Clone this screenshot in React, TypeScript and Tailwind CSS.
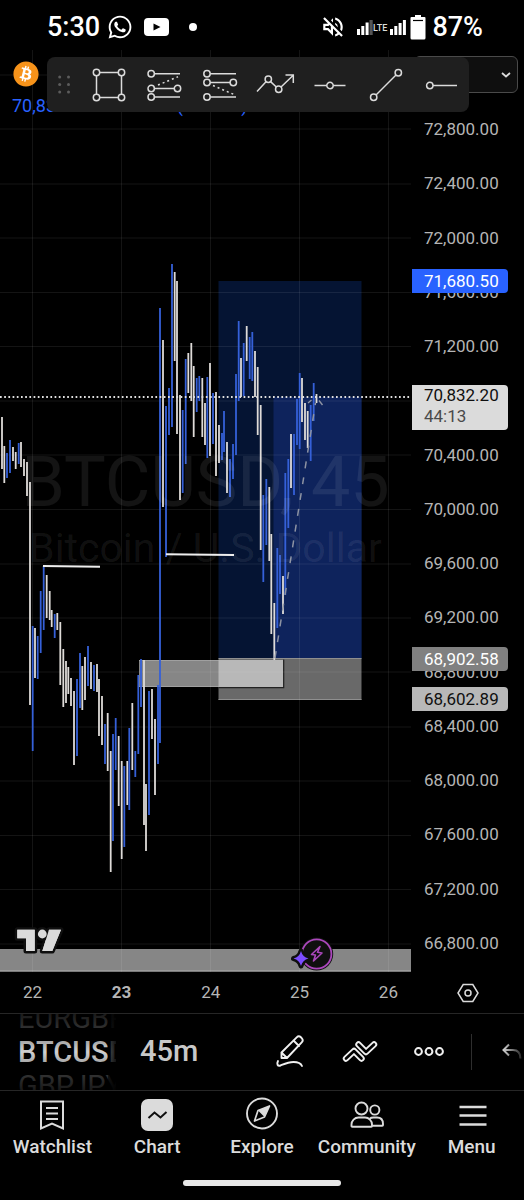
import { ReactNode } from "react";
import { FaBitcoin, FaWhatsapp } from "react-icons/fa";
import { MdOutlineVolumeOff } from "react-icons/md";

type Bar = [x: number, top: number, bottom: number, color: "w" | "b"];

const bars: Bar[] = [
  [2, 417, 469, "w"], [4.3, 446, 483, "w"], [7, 453, 478, "b"], [10, 440, 473, "b"],
  [13, 447, 461, "w"], [15.7, 452, 469, "w"], [18.7, 443, 464, "b"], [21, 442, 467, "w"],
  [24, 459, 476, "w"], [27, 462, 496, "w"], [30, 482, 705, "w"], [32.7, 626, 751, "b"],
  [35, 628, 678, "w"], [37.7, 636, 679, "b"], [40.7, 591, 653, "b"], [43.7, 566, 630, "b"],
  [46.7, 575, 618, "w"], [49.7, 591, 620, "w"], [51.7, 610, 627, "w"], [54.7, 614, 638, "b"],
  [57.3, 613, 630, "w"], [60.3, 622, 685, "w"], [63.3, 649, 707, "w"], [66, 661, 703, "w"],
  [68.3, 667, 694, "w"], [71, 678, 706, "w"], [74, 691, 765, "w"], [77, 679, 756, "b"],
  [80, 653, 708, "b"], [82.3, 666, 710, "w"], [85, 657, 700, "w"], [88, 646, 686, "b"],
  [91, 662, 689, "w"], [94, 665, 691, "b"], [97, 664, 692, "w"], [99, 679, 736, "w"],
  [102, 696, 745, "w"], [105, 724, 764, "b"], [107.7, 713, 771, "w"], [110.7, 751, 872, "w"],
  [113, 734, 841, "b"], [115.7, 718, 770, "b"], [118.7, 736, 806, "w"], [121.7, 761, 859, "w"],
  [124.3, 766, 847, "b"], [127.3, 761, 805, "w"], [129.3, 728, 810, "b"], [132.3, 703, 770, "w"],
  [135.3, 751, 777, "b"], [138.3, 675, 754, "b"], [141, 659, 707, "b"], [144, 660, 825, "w"],
  [146, 784, 851, "w"], [149, 691, 815, "b"], [152, 689, 739, "w"], [155, 719, 795, "w"],
  [158, 685, 764, "b"], [160, 308, 743, "b"], [163, 340, 507, "w"], [166, 406, 557, "b"],
  [169, 388, 435, "b"], [172, 264, 427, "b"], [174.7, 272, 361, "w"], [177, 281, 434, "w"],
  [180, 395, 500, "w"], [182.7, 410, 493, "b"], [185.7, 359, 464, "b"], [188.3, 353, 393, "w"],
  [191.3, 343, 401, "w"], [193.7, 366, 437, "w"], [196.7, 378, 412, "b"], [199.3, 376, 401, "b"],
  [202.3, 378, 437, "w"], [205, 403, 445, "w"], [207.3, 377, 458, "b"], [210, 363, 456, "w"],
  [213, 393, 444, "b"], [216, 392, 476, "w"], [219, 425, 463, "w"], [222, 433, 460, "b"],
  [224, 411, 452, "b"], [227, 442, 493, "w"], [230, 459, 497, "b"], [233, 444, 479, "b"],
  [236, 374, 455, "b"], [238.7, 321, 401, "b"], [241, 358, 397, "w"], [243.7, 343, 396, "b"],
  [246.7, 326, 361, "w"], [249.7, 337, 379, "b"], [252.3, 332, 381, "b"], [255, 351, 397, "w"],
  [257.7, 367, 435, "w"], [260.7, 405, 550, "w"], [263.3, 495, 582, "b"], [266.3, 479, 545, "b"],
  [269.3, 487, 561, "w"], [271.3, 534, 634, "w"], [274.3, 603, 660, "w"], [277.3, 548, 628, "b"],
  [280, 555, 594, "b"], [283, 576, 614, "w"], [285.3, 473, 595, "b"], [288.3, 459, 528, "b"],
  [291, 434, 488, "w"], [294, 434, 495, "b"], [297, 399, 445, "b"], [299.7, 373, 449, "b"],
  [302, 378, 422, "w"], [305, 403, 440, "w"], [307.7, 411, 448, "w"], [310.7, 405, 461, "b"],
  [313.7, 383, 421, "b"], [316.5, 394, 403, "w"],
];

const gridX = [32.5, 121.5, 210.5, 299.5, 388.5];
const gridY = [75, 129, 184, 238, 292.5, 346.5, 401, 455, 509.5, 564, 618, 672, 727, 781, 835.5, 889.5, 944];

const prices = [
  "72,800.00", "72,400.00", "72,000.00", "71,600.00", "71,200.00", "70,800.00",
  "70,400.00", "70,000.00", "69,600.00", "69,200.00", "68,800.00", "68,400.00",
  "68,000.00", "67,600.00", "67,200.00", "66,800.00",
];

const days = ["22", "23", "24", "25", "26"];

function StatusBar() {
  return (
    <header className="flex h-[50px] items-center justify-between pl-[47px] pr-[41px] pt-1 text-[27px] font-medium leading-8 text-white">
      <div className="flex items-center">
        <span>5:30</span>
        <FaWhatsapp className="ml-[7px] size-[26px]" />
        <svg className="ml-[11px] h-[18px] w-[25px]" viewBox="0 0 25 18">
          <rect width="25" height="18" rx="4" fill="#fff" />
          <path d="M9.500 5.500v7l7-3.500z" fill="#000" />
        </svg>
        <span className="ml-5 size-2 rounded-full bg-white" />
      </div>
      <div className="flex items-center">
        <MdOutlineVolumeOff className="size-[26px]" />
        <svg className="ml-[10px] h-4 w-[50px]" viewBox="0 0 50 16">
          <g fill="#fff">
            <path d="M1 10h3v6H1zM5.300 7h3v9h-3zM9.600 3.500h3V16h-3z" />
            <path d="M34 10h3v6h-3zM38.300 7h3v9h-3zM42.600 4h3v12h-3zM46.900 1h3v15h-3z" />
          </g>
          <path d="M13.500 1h3.200v15h-3.200z" fill="#555" />
          <text x="17" y="12" fill="#ddd" fontSize="9" fontFamily="Roboto, sans-serif">
            LTE
          </text>
        </svg>
        <svg className="ml-1 h-[26px] w-4" viewBox="0 0 16 26">
          <path d="M5 1h6v2h3.500a1 1 0 0 1 1 1v20a1.500 1.500 0 0 1-1.500 1.500H2A1.500 1.500 0 0 1 .5 24V4a1 1 0 0 1 1-1H5z" fill="#fff" />
          <path d="M3 6.500h10" stroke="#000" strokeWidth="1.200" />
        </svg>
        <span className="ml-[6px]">87%</span>
      </div>
    </header>
  );
}

function Chart() {
  return (
    <div className="relative h-[922px] min-w-0 flex-1 overflow-hidden">
      <svg className="h-full w-full" viewBox="0 50 411 922" preserveAspectRatio="none">
        {/* take profit zone */}
        <rect x="218.500" y="281" width="143" height="378" fill="#051433" />
        <rect x="273.500" y="397" width="88" height="262" fill="#0e235c" />
        {/* stop loss and demand zones */}
        <rect x="218.500" y="658.500" width="143" height="41.500" fill="#696969" />
        <path d="M218.500 658.500h143M218.500 699.500h143" stroke="#8f8f8f" strokeWidth="1" />
        <rect x="139" y="660" width="80" height="27" fill="#868686" />
        <path d="M139 660.500h80M139 686.500h80" stroke="#a0a0a0" strokeWidth="1" />
        <rect x="218.500" y="660" width="64.500" height="27" fill="#b8b8b8" />
        <path d="M218.500 687.700h65.200V659.500" stroke="#222" strokeWidth="1.200" fill="none" />
        <rect x="0" y="949" width="411" height="22.500" fill="#868686" />
        <path d="M0 971h411" stroke="#b0b0b0" strokeWidth="1" />

        <g stroke="#fff" strokeOpacity="0.080" strokeWidth="1">
          {gridX.map((x) => (
            <path key={x} d={`M${x} 50V972`} />
          ))}
          {gridY.map((y) => (
            <path key={y} d={`M0 ${y}H411`} />
          ))}
        </g>

        {bars.map(([x, top, bottom, color]) => (
          <path
            key={x}
            d={`M${x} ${top}V${bottom}`}
            stroke={color === "w" ? "#dedbd8" : "#3560d8"}
            strokeWidth="1.800"
          />
        ))}

        <path d="M43 566 100 566.700M166 554.300l68 .8" stroke="#eee" strokeWidth="2" />
        <path d="M275 658 315.500 403" stroke="#8d93a3" strokeWidth="1.500" strokeDasharray="7 9" />
        <path d="M308 403l3.500-3M319 400.500l3.500 4.500" stroke="#8d93a3" strokeWidth="1.400" fill="none" />
        <path d="M0 397H411" stroke="#e0e0e0" strokeWidth="2" strokeDasharray="1.700 2.500" />

        {/* logo */}
        <g fill="#dbdbdb" stroke="#0f0f0f" strokeWidth="5" paintOrder="stroke" strokeLinejoin="round">
          <path d="M17.300 929.700h17.400V951H26v-12.700h-8.700z" />
          <path d="M49 929.700h12L52.300 951h-10z" />
          <circle cx="42.300" cy="934" r="4.400" />
        </g>
        <path d="M17.300 929.700h17.400V951H26v-12.700h-8.700zM49 929.700h12L52.300 951h-10z" fill="#dbdbdb" />

        {/* event marker */}
        <circle cx="316.700" cy="954" r="16.500" fill="#0f0f0f" />
        <circle cx="316.700" cy="954" r="14.700" fill="none" stroke="#ab47bc" strokeWidth="1.800" />
        <path d="M320 946.500l-8.500 8 4 .5-2 6 8.500-8-4.500-.7z" fill="none" stroke="#ab47bc" strokeWidth="1.600" strokeLinejoin="round" />
        <path
          d="M301 951q1.500 6 7.500 7.500-6 1.500-7.500 7.500-1.500-6-7.500-7.500 6-1.500 7.500-7.500z"
          fill="#7c4dff"
          stroke="#0f0f0f"
          strokeWidth="5"
          paintOrder="stroke"
          strokeLinejoin="round"
        />
      </svg>
      <div className="pointer-events-none absolute inset-x-0 top-[392px] flex flex-col items-center whitespace-nowrap text-white/8">
        <span className="text-[70px] leading-[80px]">BTCUSD, 45</span>
        <span className="text-[41px] leading-[52px]">Bitcoin / U.S. Dollar</span>
      </div>
    </div>
  );
}

function PriceScale() {
  return (
    <div className="relative w-[113px] shrink-0 pt-[52px] text-[17px] leading-6 text-[#b5b5b5]">
      <ul className="flex h-[868px] flex-col">
        {prices.map((price) => (
          <li key={price} className="flex flex-1 items-center pl-[13px]">
            {price}
          </li>
        ))}
      </ul>
      <div className="absolute left-px top-[219px] w-24 rounded-r-sm bg-[#2962ff] pl-3 text-white">
        71,680.50
      </div>
      <div className="absolute left-px top-[335px] w-24 rounded-r-sm bg-[#dbdbdb] pb-[3px] pl-3 leading-[21px] text-[#0f0f0f]">
        <p>70,832.20</p>
        <p className="text-[#4a4a4a]">44:13</p>
      </div>
      <div className="absolute left-px top-[597px] w-24 rounded-r-sm bg-[#808080] pl-3 text-white">
        68,902.58
      </div>
      <div className="absolute left-px top-[637px] w-24 rounded-r-sm bg-[#b8b8b8] pl-3 text-[#0f0f0f]">
        68,602.89
      </div>
    </div>
  );
}

type ToolProps = {
  label: string;
  children: ReactNode;
};

function Tool({ label, children }: ToolProps) {
  return (
    <button aria-label={label} className="flex flex-1 items-center justify-center">
      <svg className="size-10" viewBox="-20 -20 40 40" fill="none" stroke="#dbdbdb" strokeWidth="1.500">
        {children}
      </svg>
    </button>
  );
}

function DrawingToolbar() {
  return (
    <div className="absolute left-[47px] right-[55px] top-[7px] flex h-[55px] rounded-lg bg-[#1f1f1f]">
      <svg className="ml-[10px] h-full w-6" viewBox="0 0 24 55" fill="#5c5c5c">
        {[20, 27.5, 35].map((y) => (
          <g key={y}>
            <circle cx="2.700" cy={y} r="1.500" />
            <circle cx="11.500" cy={y} r="1.500" />
          </g>
        ))}
      </svg>
      <Tool label="Rectangle">
        <path d="M-9.200-12.500H9.200M-9.200 12.500H9.200M-12.500-9.200V9.200M12.500-9.200V9.200" />
        <circle cx="-12.500" cy="-12.500" r="3.200" />
        <circle cx="12.500" cy="-12.500" r="3.200" />
        <circle cx="-12.500" cy="12.500" r="3.200" />
        <circle cx="12.500" cy="12.500" r="3.200" />
      </Tool>
      <Tool label="Long Position">
        <path d="M-9.500-11.200H16M-9.500 3.500H10.300M-9.500 12H16" />
        <path d="M-6 0 14-8.200" strokeDasharray="2 3" />
        <circle cx="-12.800" cy="-11.200" r="3.200" />
        <circle cx="-12.800" cy="3.500" r="3.200" />
        <circle cx="13.500" cy="3.500" r="3.200" />
        <circle cx="-12.800" cy="12" r="3.200" />
      </Tool>
      <Tool label="Short Position">
        <path d="M-9.700-11.200H16M-9.700-2.500H10M-9.700 12H16" />
        <path d="M-7 .5 14 9.500" strokeDasharray="2 3" />
        <circle cx="-13" cy="-11.200" r="3.200" />
        <circle cx="-13" cy="-2.500" r="3.200" />
        <circle cx="13.300" cy="-2.500" r="3.200" />
        <circle cx="-13" cy="12" r="3.200" />
      </Tool>
      <Tool label="Path">
        <path d="M-18 6.500-9-3.200M-4.400-3.400 1.300 2M6 2 18-9.500M10.500-10H18.300V-2" />
        <circle cx="-6.700" cy="-5.700" r="3.200" />
        <circle cx="3.700" cy="4.300" r="3.200" />
      </Tool>
      <Tool label="Horizontal Line">
        <path d="M-15.500.5H-3.200M3.200.5H15.500" />
        <circle cx="0" cy=".5" r="3.200" />
      </Tool>
      <Tool label="Trend Line">
        <path d="M-10 10 10-10" />
        <circle cx="-12.300" cy="12.300" r="3.200" />
        <circle cx="12.300" cy="-12.300" r="3.200" />
      </Tool>
      <Tool label="Horizontal Ray">
        <path d="M-8 .5H16" />
        <circle cx="-11.200" cy=".5" r="3.200" />
      </Tool>
    </div>
  );
}

function Legend() {
  return (
    <div className="absolute inset-x-0 top-0">
      <div className="flex items-start justify-between pl-[13px] pr-[6px] pt-[6px]">
        <span className="mt-[5px] rounded-full bg-[radial-gradient(#fff_60%,transparent_62%)]">
          <FaBitcoin className="size-[26px] text-[#f7931a]" />
        </span>
        <div className="relative">
          <select
            aria-label="Currency"
            className="h-[37px] w-[104px] appearance-none rounded-md border border-[#4a4a4a] bg-[#0f0f0f] pl-3 text-[17px] text-[#dbdbdb]"
          >
            <option>USD</option>
          </select>
          <svg className="pointer-events-none absolute right-[6px] top-[13px] size-3" viewBox="0 0 12 12" fill="none" stroke="#dbdbdb" strokeWidth="1.800">
            <path d="M2 4l4 3.500L10 4" />
          </svg>
        </div>
      </div>
      <p className="flex gap-[10px] pl-3 pt-px text-lg leading-6 text-[#2962ff]">
        <span>70,832.20</span>
        <span>+112.40</span>
        <span>(+0.16%)</span>
      </p>
    </div>
  );
}

function TimeScale() {
  return (
    <div className="flex h-[41px] items-center text-[17px] text-[#b5b5b5]">
      <ul className="flex flex-1 justify-between pl-[23px] pr-[13px]">
        {days.map((day) => (
          <li key={day} className={day === "23" ? "font-bold" : ""}>
            {day}
          </li>
        ))}
      </ul>
      <button aria-label="Chart settings" className="flex w-[113px] justify-center">
        <svg className="size-6" viewBox="0 0 24 24" fill="none" stroke="#dbdbdb" strokeWidth="1.500">
          <path d="M7.200 3.500h9.600L22 12l-5.200 8.500H7.200L2 12z" />
          <circle cx="12" cy="12" r="3" />
        </svg>
      </button>
    </div>
  );
}

function SymbolBar() {
  return (
    <div className="flex h-[77px] items-center border-t border-[#262626] pl-[18px]">
      <div className="relative flex h-full w-[98px] flex-col justify-center overflow-hidden text-[29px] leading-[34px] text-[#555]">
        <span>EURGBP</span>
        <span className="font-medium text-[#d0d0d0]">BTCUSD</span>
        <span>GBPJPY</span>
        <div className="absolute inset-0 bg-linear-to-b from-black/70 via-transparent to-black/70" />
        <div className="absolute inset-y-0 right-0 w-2 bg-linear-to-r from-black/60 to-black/90" />
      </div>
      <button className="ml-6 text-[29px] font-medium text-[#c8c8c8]">45m</button>
      <div className="ml-auto flex items-center">
        <button aria-label="Draw" className="flex w-[69px] justify-center">
          <svg className="size-9" viewBox="0 0 36 36" fill="none" stroke="#f0f0f0" strokeWidth="1.900" strokeLinejoin="round" strokeLinecap="round">
            <path d="M8.500 24v-5.500L23.700 3.300a3 3 0 0 1 4.200 0l.8.800a3 3 0 0 1 0 4.200L14 24zM20.500 6.500l5.500 5.500M8.500 18.500l5.500 5.500" />
            <path d="M5 27c-1.500 3-.5 5.500 2.500 4.500 6-2.500 8-3.500 13-3.500 4 0 7 .5 8.500 4" />
          </svg>
        </button>
        <button aria-label="Indicators" className="flex w-[69px] justify-center">
          <svg className="size-9" viewBox="0 0 36 36" fill="none" strokeLinejoin="round" strokeLinecap="round">
            <path d="M4 24.500l8-7.500 7.500 7.500" stroke="#f0f0f0" strokeWidth="6.400" />
            <path d="M4 24.500l8-7.500 7.500 7.500" stroke="#000" strokeWidth="2.600" />
            <path d="M16.500 10.500l7.500 7.500 8-7.500" stroke="#f0f0f0" strokeWidth="6.400" />
            <path d="M16.500 10.500l7.500 7.500 8-7.500" stroke="#000" strokeWidth="2.600" />
          </svg>
        </button>
        <button aria-label="More" className="flex w-[69px] justify-center">
          <svg className="size-9" viewBox="0 0 36 36" fill="none" stroke="#f0f0f0" strokeWidth="2">
            <circle cx="7.500" cy="17.500" r="3.400" />
            <circle cx="18" cy="17.500" r="3.400" />
            <circle cx="28.500" cy="17.500" r="3.400" />
          </svg>
        </button>
        <div className="ml-2 h-9 w-px bg-[#2e2e2e]" />
        <button aria-label="Undo" className="flex w-[52px] justify-end">
          <svg className="size-6" viewBox="0 0 24 24" fill="none" strokeWidth="2">
            <defs>
              <linearGradient id="fade" gradientUnits="userSpaceOnUse" x1="2" y1="0" x2="22" y2="0">
                <stop stopColor="#dbdbdb" />
                <stop offset="1" stopColor="#222" />
              </linearGradient>
            </defs>
            <path d="M9 4.500 3.500 10 9 15.500M3.500 10H13q7.500 0 7.500 8.500" stroke="url(#fade)" />
          </svg>
        </button>
      </div>
    </div>
  );
}

type NavItem = {
  label: string;
  icon: ReactNode;
};

const navItems: NavItem[] = [
  {
    label: "Watchlist",
    icon: (
      <path d="M7 4.500h22v27l-11-5-11 5zM12 11h12M12 16.500h12M12 22h12" stroke="#dbdbdb" strokeWidth="2" />
    ),
  },
  {
    label: "Chart",
    icon: (
      <>
        <rect x="2" y="2" width="32" height="32" rx="7" fill="#dbdbdb" />
        <path d="M9.500 21l6-5.500 6 5 6-5.500" stroke="#0f0f0f" strokeWidth="2" />
      </>
    ),
  },
  {
    label: "Explore",
    icon: (
      <>
        <circle cx="18" cy="16.500" r="15" stroke="#dbdbdb" strokeWidth="1.900" />
        <path d="M10.500 24l3.500-10.500L25.500 9l-5 11z" stroke="#dbdbdb" strokeWidth="1.700" strokeLinejoin="round" />
        <path d="M25.500 9l-5 11-6.500-6.500z" fill="#dbdbdb" />
      </>
    ),
  },
  {
    label: "Community",
    icon: (
      <g stroke="#dbdbdb" strokeWidth="1.900">
        <circle cx="12.500" cy="11.500" r="6" />
        <circle cx="25.800" cy="13" r="4.600" />
        <path d="M2.500 29v-1.500a7 7 0 0 1 7-7H16a7 7 0 0 1 7 7V29q0 .8-.8.800H3.300q-.8 0-.800-.8zM21 21.500q1-1 3.500-1H28q6 0 6 6.500v1q0 .8-.800.800H23" />
      </g>
    ),
  },
  {
    label: "Menu",
    icon: <path d="M5.500 10h27M5.500 18.500h27M5.500 27.500h27" stroke="#dbdbdb" strokeWidth="2.400" />,
  },
];

function BottomNav() {
  return (
    <nav className="flex h-[110px] flex-col border-t border-[#262626]">
      <div className="grid grid-cols-5 pt-[6px]">
        {navItems.map(({ label, icon }) => (
          <a key={label} href="#" className="flex flex-col items-center">
            <svg className="size-9" viewBox="0 0 36 36" fill="none">
              {icon}
            </svg>
            <span className="mt-[2px] text-[19px] font-medium leading-6 text-[#dbdbdb]">{label}</span>
          </a>
        ))}
      </div>
      <div className="mx-auto mb-[14px] mt-auto h-[6px] w-[158px] rounded-full bg-[#e8e8e8]" />
    </nav>
  );
}

export default function App() {
  return (
    <div className="flex min-h-screen flex-col overflow-hidden bg-black font-[Roboto,sans-serif]">
      <StatusBar />
      <main className="relative">
        <div className="flex">
          <Chart />
          <PriceScale />
        </div>
        <Legend />
        <DrawingToolbar />
        <TimeScale />
      </main>
      <SymbolBar />
      <BottomNav />
    </div>
  );
}
